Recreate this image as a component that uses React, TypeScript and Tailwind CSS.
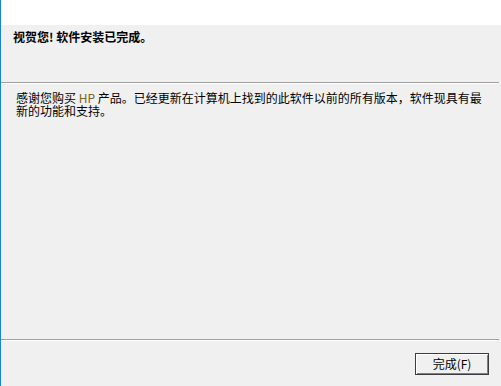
import React from "react";

export default function App() {
  const font = { fontFamily: '"Noto Sans CJK SC", "Noto Sans", sans-serif' };
  return (
    <div
      className="w-[501px] h-[386px] flex flex-col border-l border-[#1883d7] bg-[#f0f0f0] text-black overflow-hidden"
      style={font}
    >
      <div className="h-[25px] bg-white shrink-0" />
      <div className="h-[57px] shrink-0 pl-[12px] pt-[4px]">
        <div className="text-[12px] leading-[16px] font-bold">视贺您! 软件安装已完成。</div>
      </div>
      <div className="mr-[2px] h-[2px] border-t border-[#a0a0a0] border-b border-b-white shrink-0" />
      <div className="pl-[15px] pt-[7px] text-[12px] leading-[13px] whitespace-nowrap">
        <div>
          感谢您购买 <span className="text-[#7a6420]">HP</span> 产品。已经更新在计算机上找到的此软件以前的所有版本，软件现具有最
        </div>
        <div>新的功能和支持。</div>
      </div>
      <div className="flex-1" />
      <div className="mr-[2px] h-[2px] border-t border-[#a0a0a0] border-b border-b-white shrink-0" />
      <div className="h-[45px] shrink-0 flex justify-end items-start pt-[12px] pr-[12px]">
        <button
          className="w-[74px] h-[22px] flex items-center justify-center border border-[#3c3c3c] bg-[#f0f0f0] text-[12px] leading-none shadow-[inset_1px_1px_0_#ffffff,inset_-1px_-1px_0_#808080]"
          style={font}
        >
          完成(F)
        </button>
      </div>
    </div>
  );
}
